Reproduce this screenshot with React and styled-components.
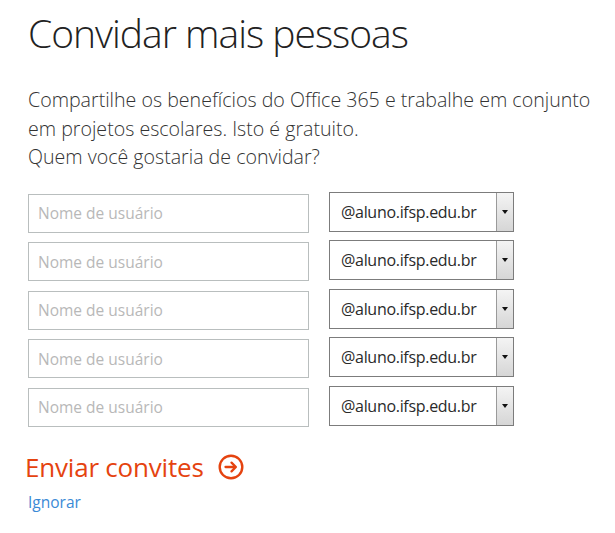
import styled, { createGlobalStyle } from "styled-components";

const Global = createGlobalStyle`
  body {
    margin: 0;
    background: #fff;
    font-family: "Open Sans", "Liberation Sans", sans-serif;
  }
`;

const Page = styled.div`
  padding: 9px 0 0 28px;
`;

const Title = styled.h1`
  margin: 0;
  font-size: 39px;
  line-height: 48px;
  font-weight: 300;
  color: #222;
  letter-spacing: -1px;
`;

const Intro = styled.p`
  margin: 29px 0 0;
  font-size: 19.6px;
  line-height: 28.5px;
  font-weight: 300;
  color: #333;
  white-space: nowrap;
`;

const Form = styled.div`
  margin-top: 20px;
  display: flex;
  flex-direction: column;
  gap: 7.5px;
`;

const Row = styled.div`
  display: flex;
  align-items: flex-start;
  gap: 20px;
  height: 41px;
`;

const Input = styled.input`
  box-sizing: border-box;
  align-self: flex-end;
  width: 281px;
  height: 39px;
  border: 1px solid #b9bebe;
  padding: 0 9px;
  font-family: inherit;
  font-size: 15.5px;
  color: #333;
  outline: none;
  &::placeholder {
    color: #b8b8b8;
  }
`;

const Select = styled.div`
  box-sizing: border-box;
  width: 185px;
  height: 40px;
  border: 1px solid #7c7c7c;
  display: flex;
  align-items: stretch;
`;

const Value = styled.span`
  flex: 1;
  display: flex;
  align-items: center;
  padding-left: 11px;
  font-size: 16px;
  color: #2a2a2a;
  letter-spacing: -0.3px;
`;

const Arrow = styled.span`
  width: 16px;
  border-left: 1px solid #9a9a9a;
  background: linear-gradient(#f4f4f4, #d6d6d6);
  display: flex;
  align-items: center;
  justify-content: center;
  &::after {
    content: "";
    border-left: 3.5px solid transparent;
    border-right: 3.5px solid transparent;
    border-top: 4px solid #111;
  }
`;

const Send = styled.a`
  margin: 22px 0 0 -3px;
  display: inline-flex;
  align-items: center;
  gap: 14px;
  color: #e5430f;
  font-size: 26px;
  line-height: 36px;
  font-weight: 400;
  letter-spacing: -0.2px;
  text-decoration: none;
  cursor: pointer;
`;

const Skip = styled.a`
  display: block;
  margin-top: 7px;
  color: #3a8ad6;
  font-size: 15.5px;
  line-height: 20px;
  text-decoration: none;
  cursor: pointer;
`;

const rows = [0, 1, 2, 3, 4];

export default function App() {
  return (
    <>
      <Global />
      <Page>
        <Title>Convidar mais pessoas</Title>
        <Intro>
          Compartilhe os benefícios do Office 365 e trabalhe em conjunto
          <br />
          em projetos escolares. Isto é gratuito.
          <br />
          Quem você gostaria de convidar?
        </Intro>
        <Form>
          {rows.map((i) => (
            <Row key={i}>
              <Input placeholder="Nome de usuário" />
              <Select>
                <Value>@aluno.ifsp.edu.br</Value>
                <Arrow />
              </Select>
            </Row>
          ))}
        </Form>
        <Send>
          Enviar convites
          <svg width="26" height="26" viewBox="0 0 26 26" fill="none">
            <circle cx="13" cy="13" r="11.3" stroke="#e5430f" strokeWidth="2.4" />
            <path
              d="M7.5 13h10M13.5 8.6l4.4 4.4-4.4 4.4"
              stroke="#e5430f"
              strokeWidth="2.3"
              strokeLinecap="round"
              strokeLinejoin="round"
            />
          </svg>
        </Send>
        <Skip>Ignorar</Skip>
      </Page>
    </>
  );
}
